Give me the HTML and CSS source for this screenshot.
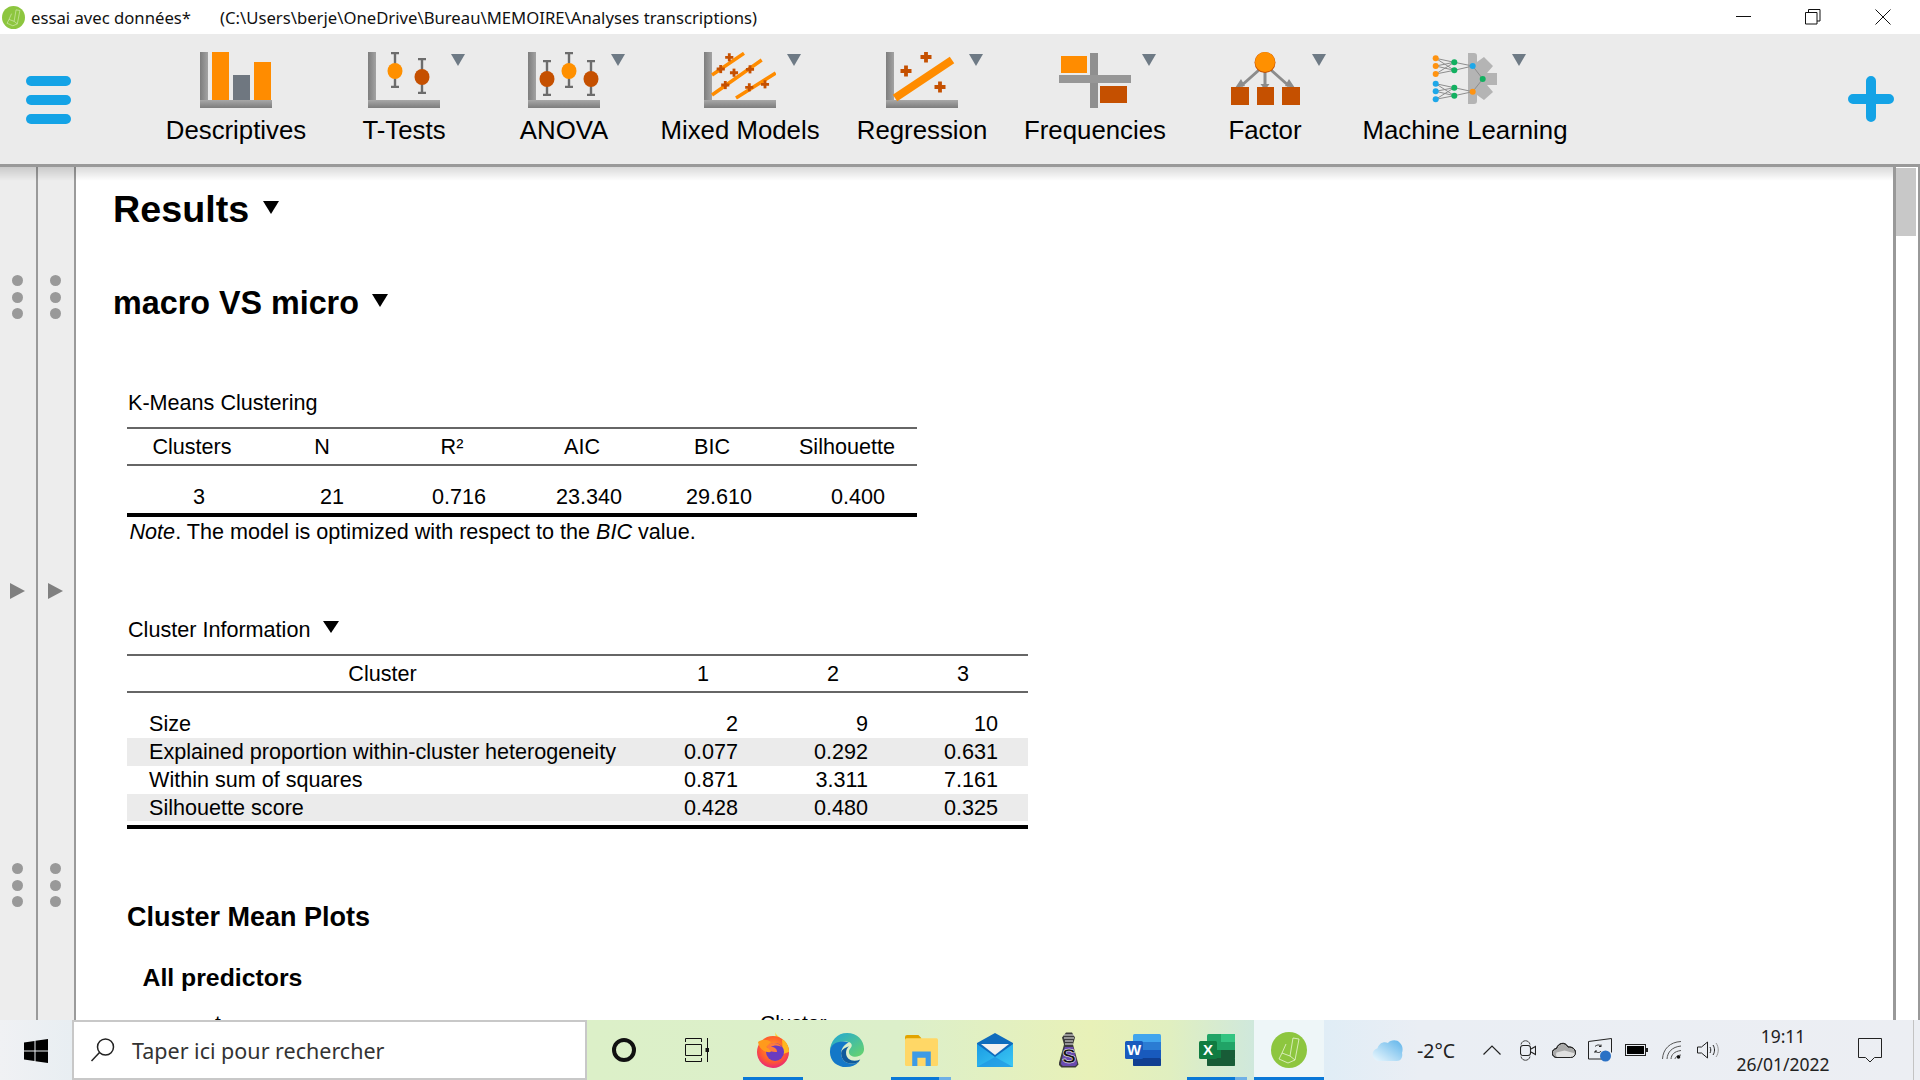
FILE: index.html
```html
<!DOCTYPE html>
<html lang="fr">
<head>
<meta charset="utf-8">
<title>JASP</title>
<link rel="stylesheet" href="styles.css">
</head>
<body>
<svg class="defs" width="0" height="0" aria-hidden="true">
  <defs>
    <linearGradient id="gAxis" x1="0" y1="0" x2="1" y2="0"><stop offset="0" stop-color="#7d7d7d"/><stop offset="1" stop-color="#a3a3a3"/></linearGradient>
    <linearGradient id="gAxisH" x1="0" y1="0" x2="0" y2="1"><stop offset="0" stop-color="#a8a8a8"/><stop offset="1" stop-color="#7d7d7d"/></linearGradient>
    <radialGradient id="gFox" cx="0.5" cy="0.4" r="0.62"><stop offset="0" stop-color="#ffa31f"/><stop offset="0.65" stop-color="#ff5b2e"/><stop offset="1" stop-color="#e8227e"/></radialGradient>
    <linearGradient id="gFlame" x1="0" y1="0" x2="0" y2="1"><stop offset="0" stop-color="#ffe13a"/><stop offset="1" stop-color="#ff8a1c"/></linearGradient>
    <linearGradient id="gEdge" x1="0" y1="0" x2="1" y2="1"><stop offset="0" stop-color="#1fa6d8"/><stop offset="1" stop-color="#6ad56a"/></linearGradient>
    <linearGradient id="gMail" x1="0" y1="0" x2="1" y2="1"><stop offset="0" stop-color="#1a9be4"/><stop offset="1" stop-color="#3cc8f4"/></linearGradient>
    <symbol id="axes" viewBox="0 0 72 56"><rect x="0" y="0" width="8" height="56" fill="url(#gAxis)"/><rect x="0" y="48" width="72" height="8" fill="url(#gAxisH)"/></symbol>
    <symbol id="bar" viewBox="0 0 10 36"><path d="M1 1h8M1 35h8M5 1v34" stroke="#6c6c6c" stroke-width="2.4" fill="none"/></symbol>
    <symbol id="plus" viewBox="0 0 12 12"><path d="M6 0.5v11M0.5 6h11" stroke="#c55000" stroke-width="3.8"/></symbol>
    <symbol id="jasp" viewBox="0 0 36 36"><circle cx="18" cy="18" r="18" fill="#8dc63f"/><path d="M22 6l6 1-4 21-5-4zM19 24l-8-3-3 6 9 4 7-3M11 21l4-9" fill="none" stroke="#eaf5d6" stroke-width="0.8"/></symbol>
  </defs>
</svg>

<header class="titlebar">
  <svg class="title-logo"><use href="#jasp"/></svg>
  <span class="doc">essai avec données*</span>
  <span class="path">(C:\Users\berje\OneDrive\Bureau\MEMOIRE\Analyses transcriptions)</span>
  <div class="winctl">
    <svg class="ctl" viewBox="0 0 16 16"><path d="M0 7.5h15" stroke="#111" fill="none"/></svg>
    <svg class="ctl" viewBox="0 0 16 16"><path d="M0.5 3.5h11.500v11.500H0.500zM3.500 3.500V0.500H15v11.500h-3" stroke="#111" fill="none"/></svg>
    <svg class="ctl" viewBox="0 0 16 16"><path d="M0.500 0.500l15 15M15.500 0.500l-15 15" stroke="#111" fill="none"/></svg>
  </div>
</header>

<nav class="toolbar">
  <div class="burger"><span></span><span></span><span></span></div>

  <div class="tool">
    <svg class="ticon" viewBox="0 0 72 56"><use href="#axes"/><rect x="12" y="0" width="17" height="48" fill="#ff8c00"/><rect x="33" y="23" width="17" height="25" fill="#6f7780"/><rect x="54" y="10" width="17" height="38" fill="#ff8c00"/></svg>
    <span class="tlabel">Descriptives</span>
  </div>
  <div class="tool arrow">
    <svg class="ticon" viewBox="0 0 72 56"><use href="#axes"/><use href="#bar" x="22" y="0" width="10" height="36"/><ellipse cx="27" cy="19" rx="7.500" ry="8" fill="#ff9000"/><use href="#bar" x="49" y="6" width="10" height="36"/><ellipse cx="54" cy="25" rx="7.500" ry="8" fill="#c55000"/></svg>
    <span class="tlabel">T-Tests</span>
  </div>
  <div class="tool arrow">
    <svg class="ticon" viewBox="0 0 72 56"><use href="#axes"/><use href="#bar" x="14" y="8" width="10" height="36"/><ellipse cx="19" cy="27" rx="7.500" ry="8" fill="#c55000"/><use href="#bar" x="36" y="0" width="10" height="36"/><ellipse cx="41" cy="19" rx="7.500" ry="8" fill="#ff9000"/><use href="#bar" x="58" y="8" width="10" height="36"/><ellipse cx="63" cy="27" rx="7.500" ry="8" fill="#c55000"/></svg>
    <span class="tlabel">ANOVA</span>
  </div>
  <div class="tool arrow">
    <svg class="ticon" viewBox="0 0 72 56"><use href="#axes"/><path d="M8 23L40 1.300M8 43L57.700 8M32 46L71.700 21" stroke="#ff8c00" stroke-width="3.500" fill="none"/><use href="#plus" x="20.800" y="0.800" width="9" height="9"/><use href="#plus" x="12.200" y="12.500" width="9" height="9"/><use href="#plus" x="25.500" y="16.200" width="9" height="9"/><use href="#plus" x="41.500" y="12.800" width="9" height="9"/><use href="#plus" x="16.800" y="28.500" width="9" height="9"/><use href="#plus" x="40.800" y="30.800" width="9" height="9"/><use href="#plus" x="56.500" y="27.800" width="9" height="9"/></svg>
    <span class="tlabel">Mixed Models</span>
  </div>
  <div class="tool arrow">
    <svg class="ticon" viewBox="0 0 72 56"><use href="#axes"/><path d="M9 46L66 8" stroke="#ff8c00" stroke-width="8" fill="none"/><use href="#plus" x="34" y="-1" width="12" height="12"/><use href="#plus" x="14" y="13" width="12" height="12"/><use href="#plus" x="48" y="29" width="12" height="12"/></svg>
    <span class="tlabel">Regression</span>
  </div>
  <div class="tool arrow">
    <svg class="ticon" viewBox="0 0 72 56"><rect x="31" y="1" width="8" height="55" fill="#8f8f8f"/><rect y="23" width="72" height="8" fill="#979797"/><rect x="2" y="4" width="26" height="17" fill="#ff8c00"/><rect x="41" y="34" width="27" height="17" fill="#c55000"/></svg>
    <span class="tlabel">Frequencies</span>
  </div>
  <div class="tool arrow">
    <svg class="ticon" viewBox="0 0 72 56"><path d="M30 18L12 34M36 18V34M42 18L60 34" stroke="#8c8c8c" stroke-width="3" fill="none"/><path d="M6 36l10-2-4-7zM31.500 32h9L36 38zM66 36l-10-2 4-7z" fill="#8c8c8c"/><ellipse cx="36" cy="10.500" rx="10.500" ry="10.500" fill="#c55000"/><ellipse cx="36" cy="10" rx="10" ry="10" fill="#ff9000"/><rect x="2" y="35" width="18" height="18" fill="#c55000"/><rect x="28" y="35" width="17" height="18" fill="#c55000"/><rect x="53" y="35" width="18" height="18" fill="#c55000"/></svg>
    <span class="tlabel">Factor</span>
  </div>
  <div class="tool arrow">
    <svg class="ticon" viewBox="0 0 72 56"><path d="M39 1h6q3 0 3 3v6l7-5 9 9-6 7h10v12h-10l6 7-9 8-7-5v6q0 3-3 3h-6z" fill="#b4b4b4"/><path d="M6.700 6.300L25.300 10.300 6.700 14 25.300 18.300 6.700 22M6.700 6.300L25.300 18.300M6.700 22L25.300 10.300M25.300 10.300L43.700 14 25.300 18.300M6.700 31.700L25.300 35.700 6.700 39.300 25.300 43.700 6.700 47.300M6.700 31.700L25.300 43.700M6.700 47.300L25.300 35.700M25.300 35.700L43.700 39.700 25.300 43.700M43.700 14L53.700 27 43.700 39.700" stroke="#8d8d8d" stroke-width="1" fill="none"/><g fill="#ff9310"><circle cx="6.700" cy="6.300" r="3"/><circle cx="6.700" cy="14" r="3"/><circle cx="6.700" cy="22" r="3"/><circle cx="43.700" cy="39.700" r="3"/></g><g fill="#1ea7e8"><circle cx="6.700" cy="31.700" r="3"/><circle cx="6.700" cy="39.300" r="3"/><circle cx="6.700" cy="47.300" r="3"/><circle cx="43.700" cy="14" r="3"/></g><g fill="#12b060"><circle cx="25.300" cy="10.300" r="3"/><circle cx="25.300" cy="18.300" r="3"/><circle cx="25.300" cy="35.700" r="3"/><circle cx="25.300" cy="43.700" r="3"/><circle cx="53.700" cy="27" r="3"/></g></svg>
    <span class="tlabel">Machine Learning</span>
  </div>
  <div class="spacer"></div>
  <svg class="addmod" viewBox="0 0 46 46"><path d="M23 5v36M5 23h36" stroke="#14a3e6" stroke-width="10" stroke-linecap="round" fill="none"/></svg>
</nav>

<main class="main">
  <aside class="panel">
    <div class="dots"><i></i><i></i><i></i></div>
    <div class="pivot"></div>
    <div class="dots"><i></i><i></i><i></i></div>
  </aside>
  <aside class="panel">
    <div class="dots"><i></i><i></i><i></i></div>
    <div class="pivot"></div>
    <div class="dots"><i></i><i></i><i></i></div>
  </aside>

  <section class="results">
    <h1 class="h-results">Results<span class="tri tri-r"></span></h1>
    <h2 class="h-analysis">macro VS micro<span class="tri tri-m"></span></h2>

    <div class="tcaption cap-km">K-Means Clustering</div>
    <table class="tb tb-km">
      <thead><tr><th>Clusters</th><th>N</th><th>R²</th><th>AIC</th><th>BIC</th><th>Silhouette</th></tr></thead>
      <tbody><tr><td>3</td><td class="n">21</td><td>0.716</td><td>23.340</td><td>29.610</td><td class="last">0.400</td></tr></tbody>
    </table>
    <p class="note"><em>Note</em>. The model is optimized with respect to the <em>BIC</em> value.</p>

    <div class="tcaption cap-ci">Cluster Information<span class="tri tri-c"></span></div>
    <table class="tb tb-ci">
      <thead><tr><th class="wide">Cluster</th><th>1</th><th>2</th><th>3</th></tr></thead>
      <tbody>
        <tr class="first"><td>Size</td><td>2</td><td>9</td><td>10</td></tr>
        <tr class="alt"><td>Explained proportion within-cluster heterogeneity</td><td>0.077</td><td>0.292</td><td>0.631</td></tr>
        <tr><td>Within sum of squares</td><td>0.871</td><td>3.311</td><td>7.161</td></tr>
        <tr class="alt"><td>Silhouette score</td><td>0.428</td><td>0.480</td><td>0.325</td></tr>
      </tbody>
    </table>

    <h3 class="h-plots">Cluster Mean Plots</h3>
    <h4 class="h-all">All predictors</h4>
    <div class="plot"><span class="plot-y">t</span><span class="plot-x">Cluster</span></div>
  </section>

  <div class="scroll"><div class="thumb"></div></div>
</main>

<footer class="taskbar">
  <div class="start">
    <svg class="win" viewBox="0 0 24 24"><path d="M0 3.500L10.500 2v9.500H0zM11.500 1.800L24 0v11.500H11.500zM0 12.500h10.500V22L0 20.500zM11.500 12.500H24V24L11.500 22.200z" fill="#000"/></svg>
  </div>
  <div class="search">
    <svg class="lens" viewBox="0 0 26 26"><circle cx="15.500" cy="10" r="8" fill="none" stroke="#222" stroke-width="1.500"/><path d="M9.500 15.500L1.500 24" stroke="#222" stroke-width="1.500"/></svg>
    <span class="stext">Taper ici pour rechercher</span>
  </div>
  <div class="cell c-sys"><span class="cortana"></span></div>
  <div class="cell c-sys2">
    <svg class="tv" viewBox="0 0 24 24"><path d="M0.500 4V0.500h16V4M0.500 20v3.500h16V20M0.500 6.500h16v11H0.500zM22.500 0v10M22.500 14v10" fill="none" stroke="#111"/><rect x="20.500" y="10" width="4" height="4" fill="#111"/></svg>
  </div>
  <div class="cell app on">
    <svg class="ai" viewBox="0 0 36 36"><path d="M20 0c1 5 12 8 14 18L22 15z" fill="url(#gFlame)"/><circle cx="18" cy="20" r="16" fill="url(#gFox)"/><path d="M27 7c5 3 7 8 7 13l-6 2z" fill="#ffb81f"/><circle cx="20" cy="20" r="9" fill="#6a3bc0"/><path d="M12 14c4-4 11-4 15 1-4-2-8-2-11 0 4 0 6 2 6 5-5 0-10-1-10-6z" fill="#ff7a3c"/><path d="M3 10c4-3 9-3 13 0l-5 5c3 1 4 3 5 5C10 21 4 17 3 10z" fill="#ff9a1c"/></svg>
  </div>
  <div class="cell app">
    <svg class="ai" viewBox="0 0 38 36"><path d="M1 20C1 8 9 0 19 0c11 0 18 8 18 17 0 5-4 8-9 8-4 0-7-2-7-5 0-3 3-4 3-7 0-3-4-4-7-4C9 9 1 14 1 20z" fill="url(#gEdge)"/><path d="M1 20c0 10 8 16 17 16 6 0 10-2 13-5-8 3-17 1-18-8-1-6 3-11 8-13C11 7 1 11 1 20z" fill="#1478c8"/><path d="M13 23c1 9 10 11 18 8l2-3c-7 3-15 1-15-7 0-3 1-5 3-7-5 2-9 4-8 9z" fill="#0f5a9c"/></svg>
  </div>
  <div class="cell app on two">
    <svg class="ai ai-folder" viewBox="0 0 32 30"><path d="M0 2q0-2 2-2h11l3 3-3 3H0z" fill="#e2a400"/><rect y="3" width="32" height="27" rx="1.500" fill="#ffd766"/><path d="M7 30V16h18v14h-5v-8h-8v8z" fill="#3d9be6"/></svg>
  </div>
  <div class="cell app">
    <svg class="ai" viewBox="0 0 36 34"><path d="M0 10L18 0l18 10v24H0z" fill="#0f6cbd"/><path d="M4 11h28L18 22z" fill="#f1f1f1"/><path d="M0 11l18 13 18-13v23H0z" fill="url(#gMail)"/><path d="M0 34l18-10 18 10z" fill="#1c8fe0" opacity="0.600"/></svg>
  </div>
  <div class="cell app">
    <svg class="ai-zip" viewBox="0 0 20 36"><path d="M7 0.500h6l3 5-2 7 5.500 20-3 3H2.500l-3-3 5.500-20-2-7z" fill="#3c3c3c"/><path d="M5.800 15h8.400l4 17-2 2H3.800l-2-2z" fill="#6a4bb0"/><path d="M5 3h10M5 6h10M6 9h8M6 12h8" stroke="#eee" stroke-width="1.200"/><text x="10" y="31" class="zip-s">S</text></svg>
  </div>
  <div class="cell app">
    <svg class="ai" viewBox="0 0 36 32"><rect x="8" width="28" height="32" rx="1.500" fill="#41a5ee"/><rect x="8" y="8" width="28" height="8" fill="#2b7cd3"/><rect x="8" y="16" width="28" height="8" fill="#185abd"/><rect x="8" y="24" width="28" height="8" rx="1" fill="#103f91"/><rect y="7" width="18" height="18" rx="1.500" fill="#185abd"/><text x="9" y="21" class="off-l">W</text></svg>
  </div>
  <div class="cell app on two">
    <svg class="ai" viewBox="0 0 36 32"><rect x="8" width="28" height="32" rx="1.500" fill="#21a366"/><rect x="22" width="14" height="8" fill="#33c481"/><rect x="8" y="16" width="14" height="8" fill="#107c41"/><rect x="22" y="16" width="14" height="8" fill="#185c37"/><rect x="8" y="24" width="28" height="8" rx="1" fill="#185c37"/><rect y="7" width="18" height="18" rx="1.500" fill="#107c41"/><text x="9" y="21" class="off-l">X</text></svg>
  </div>
  <div class="cell active"><svg class="ai"><use href="#jasp"/></svg></div>

  <div class="tray">
    <div class="weather">
      <svg class="cloud" viewBox="0 0 32 22"><defs><linearGradient id="gCloud" x1="0" y1="1" x2="1" y2="0"><stop offset="0" stop-color="#eef9fe"/><stop offset="1" stop-color="#5fb4ea"/></linearGradient></defs><path d="M7 22a6.500 6.500 0 0 1-1.500-12.800C7 4 12 2 16 4c2-3 9-4 12 0 3 3 3 7 2 10 1 4-1 8-5 8z" fill="url(#gCloud)"/></svg>
      <span class="temp">-2°C</span>
    </div>
    <div class="ticons">
      <div class="ti"><svg width="18" height="10" viewBox="0 0 18 10"><path d="M0.500 9.500L9 1l8.500 8.500" fill="none" stroke="#222" stroke-width="1.200"/></svg></div>
      <div class="ti"><svg width="16" height="23" viewBox="0 0 16 23"><path d="M1 5.500c1-5 8-5 9 0M1 17.500c1 5 8 5 9 0" fill="none" stroke="#444"/><rect x="0.500" y="6.500" width="10" height="10" rx="2.500" fill="none" stroke="#222" stroke-width="1.100"/><path d="M11 10l4.500-2.500v8L11 13" fill="none" stroke="#222" stroke-width="1.100"/></svg></div>
      <div class="ti"><svg width="24" height="16" viewBox="0 0 24 16"><path d="M5 15.500a4.500 4.500 0 0 1-.5-9C6 1 13-1 16 5c4-.5 7.500 2 7.500 5.500 0 3-2 5-5 5z" fill="#aaa" stroke="#222"/><path d="M5 15.500a4.500 4.500 0 0 1-.5-5l8-2 11 3c0 2-2 4-5 4z" fill="#e0e0e0"/><path d="M5 15.500a4.500 4.500 0 0 1-.5-9C6 1 13-1 16 5c4-.5 7.500 2 7.500 5.500 0 3-2 5-5 5z" fill="none" stroke="#222"/></svg></div>
      <div class="ti"><svg width="24" height="24" viewBox="0 0 24 24"><path d="M0.500 3.500L23.500 0.500v14M14 21H0.500V3.500" fill="none" stroke="#222"/><path d="M7 8.500c2-2 5-2 6 0M13 8.500v-2M13 8.500h-2M7 13c2 2 5 2 6 0M7 13v2M7 13h2" fill="none" stroke="#222"/><circle cx="17.500" cy="18" r="5.500" fill="#2a71c5"/></svg></div>
      <div class="ti"><svg width="23" height="12" viewBox="0 0 23 12"><rect x="0.500" y="0.500" width="20" height="11" fill="none" stroke="#222"/><rect x="2" y="2" width="17" height="8" fill="#000"/><rect x="21" y="4" width="2" height="4" fill="#222"/></svg></div>
      <div class="ti"><svg width="20" height="18" viewBox="0 0 20 18"><path d="M0.500 18C1 8 8 1 19 0.500M5 18c.5-7 5-12 14-13M9 18c.5-4.500 3-7.500 10-8.500M13 18c.5-2 2-3.500 6-4" fill="none" stroke="#555"/><circle cx="16.500" cy="16" r="1.800" fill="#111"/></svg></div>
      <div class="ti"><svg width="22" height="18" viewBox="0 0 22 18"><path d="M0.500 6h4l6-5v16l-6-5h-4z" fill="none" stroke="#222"/><path d="M13 6c1 2 1 4 0 6M16 4c2 3 2 7 0 10" fill="none" stroke="#222"/><path d="M19 2c3 4 3 10 0 14" fill="none" stroke="#999"/></svg></div>
    </div>
    <div class="clock"><span>19:11</span><span>26/01/2022</span></div>
    <div class="notif"><svg width="24" height="25" viewBox="0 0 24 25"><path d="M0.500 0.500h23v19h-7l-4.500 4.500-4.500-4.500h-7z" fill="none" stroke="#222"/></svg></div>
    <div class="peek"></div>
  </div>
</footer>
</body>
</html>
```

FILE: styles.css
```css
* { box-sizing: border-box; }
html, body { margin: 0; padding: 0; height: 100%; }
body {
  width: 1920px;
  height: 1080px;
  overflow: hidden;
  display: flex;
  flex-direction: column;
  background: #fff;
  color: #000;
  font-family: "Liberation Sans", Arial, sans-serif;
}
.defs { position: absolute; }

/* title bar */
.titlebar {
  height: 34px;
  flex: none;
  display: flex;
  align-items: center;
  background: #fff;
  font-family: "Noto Sans", sans-serif;
  font-size: 16.7px;
  color: #111;
}
.title-logo { width: 23px; height: 23px; margin-left: 2px; flex: none; }
.doc { margin-left: 6px; width: 189px; white-space: nowrap; }
.path { flex: 1; white-space: nowrap; }
.winctl { display: flex; width: 155px; margin-right: 29px; justify-content: space-between; flex: none; }
.ctl { width: 16px; height: 16px; display: block; }
.ctl:nth-child(2) { margin-right: 2px; }

/* toolbar */
.toolbar {
  height: 133px;
  flex: none;
  display: grid;
  grid-template-columns: 147px 178px 158px 162px 190px 174px 172px 168px 232px 1fr 46px;
  background: #ebebeb;
  border-bottom: 3px solid #999;
  padding-right: 26px;
}
.burger {
  display: flex;
  flex-direction: column;
  gap: 9px;
  padding: 42px 0 0 26px;
}
.burger span { display: block; width: 45px; height: 10px; border-radius: 5px; background: #14a3e6; }
.tool {
  position: relative;
  display: flex;
  flex-direction: column;
  align-items: center;
  padding-top: 18px;
}
.ticon { width: 72px; height: 56px; flex: none; display: block; }
.tlabel { margin-top: 7px; font-size: 25.8px; line-height: 30px; white-space: nowrap; color: #000; }
.arrow::after {
  content: "";
  position: absolute;
  top: 20px;
  left: calc(50% + 47px);
  border-left: 7.5px solid transparent;
  border-right: 7.5px solid transparent;
  border-top: 12px solid #6e7a85;
}
.addmod { width: 46px; height: 46px; margin-top: 42px; }

/* main */
.main { flex: 1; min-height: 0; display: flex; overflow: hidden; position: relative; }
.main::before {
  content: "";
  position: absolute;
  left: 0;
  right: 27px;
  top: 0;
  height: 14px;
  background: linear-gradient(#00000026, #00000000);
}
.panel {
  width: 38px;
  flex: none;
  background: #ededed;
  border-right: 2px solid #9a9a9a;
  display: flex;
  flex-direction: column;
  justify-content: space-between;
  align-items: center;
  padding: 108px 2px 113px 0;
}
.dots { display: flex; flex-direction: column; gap: 5.5px; }
.dots i { display: block; width: 11px; height: 11px; border-radius: 50%; background: #999; }
.pivot {
  width: 0;
  height: 0;
  border-top: 8px solid transparent;
  border-bottom: 8px solid transparent;
  border-left: 15px solid #808080;
}

.results { flex: 1; min-width: 0; padding: 20px 0 0 37px; }
.h-results { margin: 0; font-size: 37.7px; line-height: 44px; font-weight: 700; }
.h-analysis { margin: 52px 0 0; font-size: 32.3px; line-height: 40px; font-weight: 700; }
.tri {
  display: inline-block;
  width: 0;
  height: 0;
  border-left: 8px solid transparent;
  border-right: 8px solid transparent;
  border-top: 13px solid #000;
  vertical-align: middle;
}
.tri-r { margin: -10px 0 0 14px; }
.tri-m { margin: -10px 0 0 13px; }
.tri-c { margin: -8px 0 0 13px; border-top-width: 12px; }

.tcaption { margin-left: 14px; padding-left: 1px; font-size: 21.6px; line-height: 28px; }
.cap-km { margin-top: 66px; }
.cap-ci { margin-top: 70px; }

.tb {
  margin: 10px 0 0 14px;
  border-collapse: separate;
  border-spacing: 0;
  table-layout: fixed;
  font-size: 21.6px;
}
.tb th, .tb td { padding: 0; font-weight: 400; }
.tb th { height: 39px; border-top: 2px solid #666; border-bottom: 2px solid #666; line-height: 30px; text-align: center; }

.tb-km { width: 790px; }
.tb-km th { width: 130px; }
.tb-km th:last-child { width: 140px; }
.tb-km td {
  height: 51px;
  padding: 16px 0 1px 14px;
  text-align: center;
  line-height: 28px;
  border-bottom: 4px solid #000;
}
.tb-km td.n { padding-left: 20px; }
.tb-km td.last { padding-left: 22px; }
.note { margin: 1px 0 0; padding-left: 16.5px; font-size: 21.6px; line-height: 28px; }

.tb-ci { width: 901px; }
.tb-ci th { width: 130px; }
.tb-ci th.wide { width: 511px; }
.tb-ci td { height: 28px; line-height: 28px; padding: 0 30px 0 0; text-align: right; }
.tb-ci td:first-child { padding: 0 0 0 22px; text-align: left; white-space: nowrap; }
.tb-ci .first td { height: 45px; padding-top: 16px; }
.tb-ci .alt td { background: #ebebeb; }
.tb-ci tbody tr:last-child td {
  height: 31px;
  padding-bottom: 3px;
  border-bottom: 4px solid #000;
  background: linear-gradient(#ebebeb 0 27px, #fff 27px);
}

.h-plots { margin: 71px 0 0 14px; font-size: 27px; line-height: 34px; font-weight: 700; }
.h-all { margin: 29px 0 0 29.500px; font-size: 24.8px; line-height: 30px; font-weight: 700; }
.plot { margin: 18px 0 0 14px; height: 40px; display: flex; font-size: 21px; line-height: 24px; }
.plot-y { margin-left: 88px; width: 545px; }
.plot-x { white-space: nowrap; }

.scroll {
  width: 27px;
  flex: none;
  background: #fff;
  border-left: 3px solid #999;
  border-right: 2px solid #999;
  padding-top: 1px;
}
.thumb { width: 20px; height: 68px; background: #c8c8c8; }

/* taskbar */
.taskbar {
  height: 60px;
  flex: none;
  display: flex;
  align-items: stretch;
  background: linear-gradient(90deg, #f0f1f4 0, #e8eef2 72px, #dcf0c8 586px, #dcefca 900px, #e8f1b8 1090px, #e0efc0 1170px, #cfe8dc 1254px, #e0edf6 1324px, #eaeef4 1420px, #eceef3 1920px);
}
.start { width: 72px; display: flex; align-items: center; justify-content: center; }
.win { width: 24px; height: 24px; margin-top: 1px; }
.search {
  width: 515px;
  background: #fff;
  border: 2px solid #c8c8c8;
  display: flex;
  align-items: center;
  padding-left: 16px;
  font-family: "Noto Sans", sans-serif;
  font-size: 21.5px;
  color: #333;
}
.lens { width: 26px; height: 26px; flex: none; }
.stext { margin-left: 16px; }
.cell { position: relative; display: flex; align-items: center; justify-content: center; flex: none; width: 74px; }
.c-sys { width: 74px; }
.c-sys2 { width: 75px; padding-right: 4px; }
.cortana { width: 24px; height: 24px; border-radius: 50%; border: 4px solid #111; }
.tv { width: 24px; height: 24px; }
.ai { width: 36px; height: 36px; display: block; }
.ai-folder { width: 33px; height: 31px; }
.ai-zip { width: 20px; height: 36px; display: block; }
.on::after {
  content: "";
  position: absolute;
  left: 7px;
  right: 7px;
  bottom: 0;
  height: 3px;
  background: #0a78d7;
}
.two::after { background: linear-gradient(90deg, #0a78d7 0 80%, #6fb0e6 80%); }
.active { width: 70px; background: #eef6f8; }
.active::after { content: ""; position: absolute; left: 0; right: 0; bottom: 0; height: 3px; background: #0a78d7; }
.off-l { font-family: "Liberation Sans", sans-serif; font-size: 15px; font-weight: 700; fill: #fff; text-anchor: middle; }
.zip-s { font-family: "Liberation Sans", sans-serif; font-size: 21px; font-weight: 700; fill: #111; text-anchor: middle; stroke: #fff; stroke-width: 0.5px; }

.tray {
  flex: 1;
  display: flex;
  align-items: center;
  margin-left: 36px;
  font-family: "Noto Sans", sans-serif;
  color: #222;
}
.weather { width: 114px; display: flex; align-items: center; padding-left: 12px; gap: 13px; flex: none; }
.cloud { width: 32px; height: 22px; flex: none; }
.temp { font-size: 19.5px; }
.ticons { display: flex; flex: none; }
.ti { width: 36px; display: flex; align-items: center; justify-content: center; }
.clock { width: 114px; flex: none; display: flex; flex-direction: column; align-items: center; gap: 4px; font-size: 17.5px; line-height: 24px; }
.notif { width: 60px; flex: none; display: flex; justify-content: center; }
.peek { margin-left: 13px; width: 1px; height: 100%; background: #c3c3c3; }
```
